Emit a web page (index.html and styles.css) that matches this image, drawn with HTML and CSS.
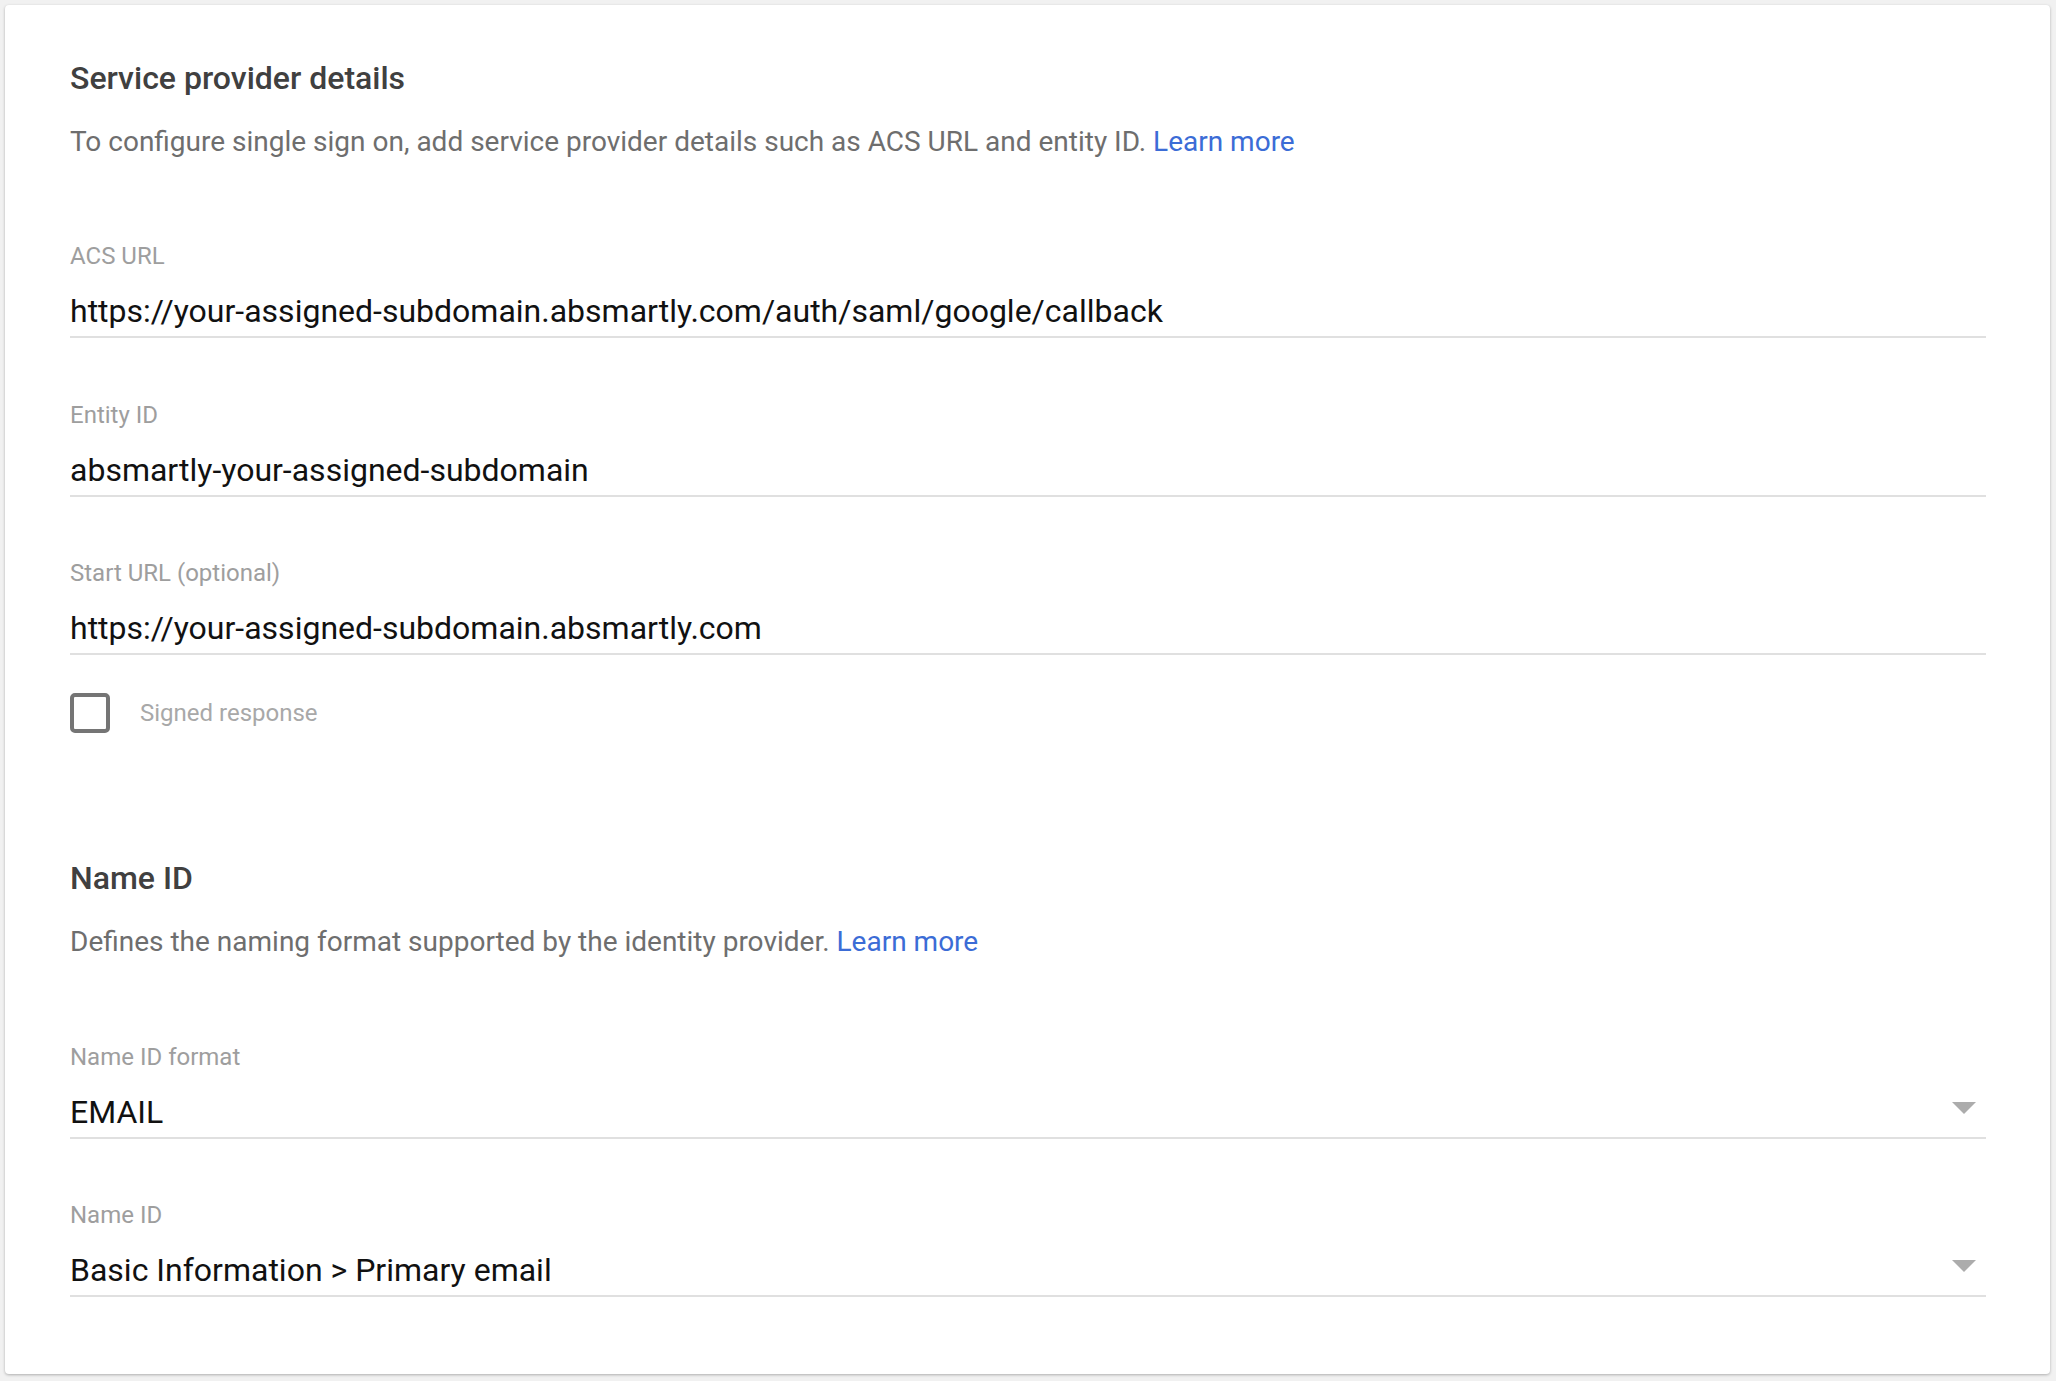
FILE: index.html
```html
<!DOCTYPE html>
<html lang="en">
<head>
<meta charset="utf-8">
<title>Service provider details</title>
<link rel="stylesheet" href="styles.css">
</head>
<body>
<div class="card">
  <section class="section">
    <h2 class="title">Service provider details</h2>
    <p class="desc">To configure single sign on, add service provider details such as ACS URL and entity ID. <a class="link" href="#">Learn more</a></p>
  </section>

  <div class="field first">
    <div class="label">ACS URL</div>
    <div class="value">https://your-assigned-subdomain.absmartly.com/auth/saml/google/callback</div>
  </div>
  <div class="field">
    <div class="label">Entity ID</div>
    <div class="value">absmartly-your-assigned-subdomain</div>
  </div>
  <div class="field">
    <div class="label">Start URL (optional)</div>
    <div class="value">https://your-assigned-subdomain.absmartly.com</div>
  </div>

  <label class="check">
    <span class="box"></span>
    <span class="check-label">Signed response</span>
  </label>

  <section class="section second">
    <h2 class="title">Name ID</h2>
    <p class="desc">Defines the naming format supported by the identity provider. <a class="link" href="#">Learn more</a></p>
  </section>

  <div class="field first-select">
    <div class="label">Name ID format</div>
    <div class="value select"><span>EMAIL</span><span class="arrow"></span></div>
  </div>
  <div class="field last">
    <div class="label">Name ID</div>
    <div class="value select"><span>Basic Information &gt; Primary email</span><span class="arrow"></span></div>
  </div>
</div>
</body>
</html>
```

FILE: styles.css
```css
html, body {
  margin: 0;
  padding: 0;
  background: #f1f1f1;
}

body {
  font-family: Roboto, "Noto Sans", Arial, sans-serif;
  padding: 5px 6px 5px 5px;
}

.card {
  background: #fff;
  border-radius: 4px;
  box-shadow: 0 1px 3px rgba(0, 0, 0, 0.28);
  padding: 54px 64px 77px 65px;
}

.section {
  margin: 0;
}

.section.second {
  margin-top: 126px;
}

.title {
  margin: 0;
  font-size: 32px;
  line-height: 38px;
  font-weight: 500;
  color: #404040;
}

.desc {
  margin: 27px 0 0;
  font-size: 28px;
  line-height: 36px;
  color: #6e6e6e;
}

.link {
  color: #3b6cd6;
  text-decoration: none;
}

.field {
  margin-top: 62.5px;
}

.field.first {
  margin-top: 82px;
}

.field.first-select {
  margin-top: 83px;
}

.field.last {
  margin-top: 62px;
}

.label {
  font-size: 24px;
  line-height: 28px;
  color: #9e9e9e;
}

.value {
  margin-top: 22px;
  font-size: 32px;
  line-height: 38px;
  color: #111;
  padding-bottom: 6px;
  border-bottom: 2px solid #e0e0e0;
}

.select {
  display: flex;
  align-items: center;
  justify-content: space-between;
}

.arrow {
  width: 0;
  height: 0;
  border-left: 12px solid transparent;
  border-right: 12px solid transparent;
  border-top: 12px solid #acacac;
  margin-right: 10px;
  margin-top: -8px;
}

.check {
  display: flex;
  align-items: center;
  gap: 30px;
  margin-top: 38px;
}

.box {
  box-sizing: border-box;
  width: 40px;
  height: 40px;
  border: 4px solid #757575;
  border-radius: 5px;
}

.check-label {
  font-size: 24px;
  line-height: 28px;
  color: #a8a8a8;
}
```
